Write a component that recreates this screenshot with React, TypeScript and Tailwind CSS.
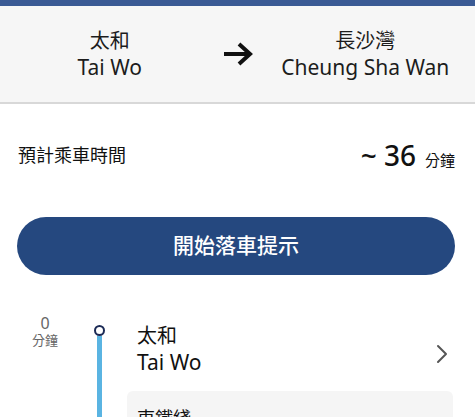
import React from "react";

const FONT = {
  fontFamily: '"Noto Sans", "Noto Sans CJK TC", sans-serif',
};

function StationLabel({ zh, en }: { zh: string; en: string }) {
  return (
    <div className="flex flex-col items-center text-[#1c1c1c]">
      <span className="text-[20px] leading-[26px]">{zh}</span>
      <span className="text-[21px] leading-[26px]">{en}</span>
    </div>
  );
}

function ArrowRight() {
  return (
    <svg width="32" height="26" viewBox="0 0 32 26" fill="none">
      <path d="M2 13H27" stroke="#111" strokeWidth="4" />
      <path
        d="M17 3L28 13L17 23"
        stroke="#111"
        strokeWidth="4"
        strokeLinejoin="miter"
      />
    </svg>
  );
}

function Chevron() {
  return (
    <svg width="14" height="20" viewBox="0 0 14 20" fill="none">
      <path
        d="M3 2L11 10L3 18"
        stroke="#555"
        strokeWidth="2"
        strokeLinecap="round"
        strokeLinejoin="round"
      />
    </svg>
  );
}

export default function App() {
  return (
    <div className="w-[475px] h-[417px] overflow-hidden bg-white" style={FONT}>
      <div className="h-[6px] bg-[#3a5a94]" />

      {/* from / to header */}
      <div className="h-[98px] bg-[#f6f6f6] border-b-2 border-[#d8d8d8] grid grid-cols-[1fr_36px_1fr] items-center">
        <StationLabel zh="太和" en="Tai Wo" />
        <div className="flex justify-center">
          <ArrowRight />
        </div>
        <StationLabel zh="長沙灣" en="Cheung Sha Wan" />
      </div>

      {/* journey time */}
      <div className="mt-[31px] h-[40px] pl-[18px] pr-[20px] flex items-center justify-between text-[#111]">
        <span className="text-[18px]">預計乘車時間</span>
        <div className="flex items-baseline">
          <span className="text-[28px] font-medium">~ 36</span>
          <span className="ml-[9px] text-[15px]">分鐘</span>
        </div>
      </div>

      <button className="mt-[42px] ml-[17px] w-[438px] h-[58px] rounded-full bg-[#25487f] text-white text-[21px] font-medium flex items-center justify-center">
        開始落車提示
      </button>

      {/* timeline */}
      <div className="mt-[40px] flex">
        <div className="w-[90px] flex flex-col items-center text-[#666]">
          <span className="text-[16px] leading-[16px]">0</span>
          <span className="mt-[1px] text-[13px] leading-[16px]">分鐘</span>
        </div>
        <div className="w-[18px] flex flex-col items-center">
          <div className="mt-[10px] w-[11px] h-[11px] rounded-full border-2 border-[#1b2a55] bg-white" />
          <div className="w-[5px] h-[120px] bg-[#5ab4e2]" />
        </div>
        <div className="ml-[19px] mr-[22px] flex-1 pt-[8px]">
          <div className="pl-[10px] pr-[4px] flex items-center justify-between text-[#111]">
            <div className="flex flex-col">
              <span className="text-[20px] leading-[26px]">太和</span>
              <span className="text-[21px] leading-[26px]">Tai Wo</span>
            </div>
            <div className="mt-[10px]">
              <Chevron />
            </div>
          </div>
          <div className="mt-[16px] rounded-[6px] bg-[#f5f5f5] pl-[10px] pt-[14px] h-[80px] text-[18px] text-[#111]">
            東鐵綫
          </div>
        </div>
      </div>
    </div>
  );
}
